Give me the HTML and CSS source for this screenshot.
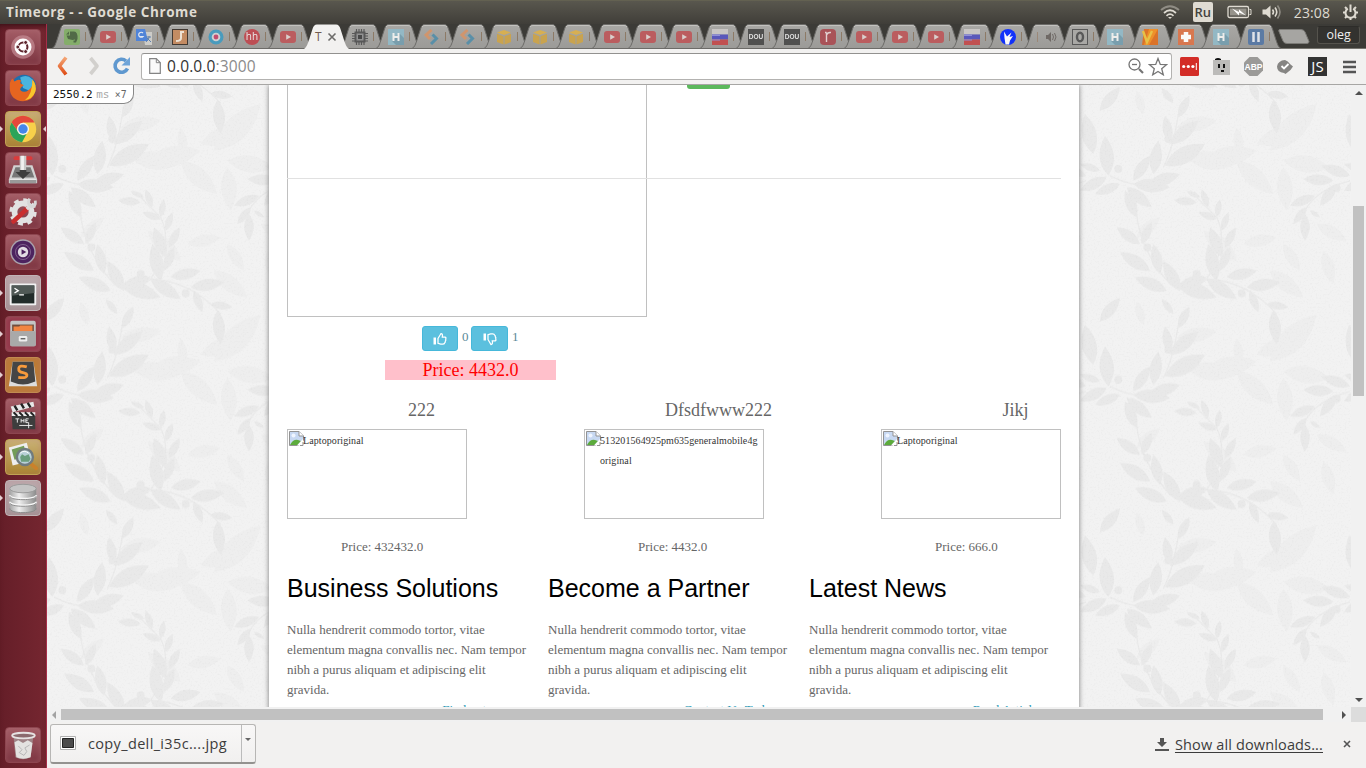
FILE: index.html
```html
<!DOCTYPE html>
<html lang="en">
<head>
<meta charset="utf-8">
<title>Timeorg - - Google Chrome</title>
<link rel="stylesheet" href="styles.css">
</head>
<body>
<svg class="defs" width="0" height="0">
  <defs>
    <linearGradient id="tabfill" x1="0" y1="0" x2="0" y2="1"><stop offset="0" stop-color="#a9a8a5"/><stop offset="1" stop-color="#9b9a97"/></linearGradient>
    <linearGradient id="metal" x1="0" y1="0" x2="1" y2="0"><stop offset="0" stop-color="#a5a5a5"/><stop offset=".35" stop-color="#eee"/><stop offset="1" stop-color="#8c8c8c"/></linearGradient>
    <linearGradient id="orange" x1="0" y1="0" x2="0" y2="1"><stop offset="0" stop-color="#f4a676"/><stop offset="1" stop-color="#df4d16"/></linearGradient>
    <symbol id="tab" viewBox="0 0 46 25"><path d="M0 24.500C3 23 3.500 20 5 16L8.500 5C9.500 2 10.500.5 13 .5H32C34.500.5 35.500 2 36.500 5L40 16C41.500 20 42 23 45 24.500Z" fill="url(#tabfill)" stroke="#6c6b68"/><path d="M10 3Q11 1.500 13 1.500H32Q34 1.500 35 3" stroke="#c3c2bf" fill="none"/></symbol>
    <symbol id="yt" viewBox="0 0 16 16"><rect y="2" width="16" height="12" rx="3" fill="#bd5a5c"/><path d="M6.200 5.200 11 8l-4.800 2.800Z" fill="#ddd3d0"/></symbol>
    <symbol id="h" viewBox="0 0 16 16"><path d="M0 0h16v16H0Z" fill="#93bac7"/><path d="M11 4l5 5v7H8l-4-4Z" fill="#789faf"/><path d="M5.500 4v8M10.500 4v8M5.500 8h5" stroke="#f2f2f0" stroke-width="2"/></symbol>
    <symbol id="zig" viewBox="0 0 16 16"><path d="M7.500 1 2 6 6 10" stroke="#d4956b" stroke-width="3" fill="none"/><path d="M8.500 5.500 12.500 9.500 7 15" stroke="#568fa9" stroke-width="3" fill="none"/></symbol>
    <symbol id="box" viewBox="0 0 16 16"><path d="M1 3.500 8 1l7 2.500L8 6Z" fill="#dab04e"/><path d="M1 4.800 7.500 7.200V15.500L1 13ZM15 4.800 8.500 7.200V15.500L15 13Z" fill="#cca44b"/></symbol>
    <symbol id="flag" viewBox="0 0 16 16"><path d="M0 0h16v5.500H0Z" fill="#cbc8c6"/><path d="M0 5.500h16v5H0Z" fill="#5755bd"/><path d="M0 10.500h16V16H0Z" fill="#c34c4d"/><path d="M0 5.500h8v1.500H0ZM0 10.500h8v1H0Z" fill="#8f8fdb"/></symbol>
    <symbol id="broken" viewBox="0 0 16 16"><path d="M.5.5H10L14.500 5V9L10 14.500H.5Z" fill="#c7d8f2" stroke="#939393"/><path d="M10 .5V5h4.500" fill="#fff" stroke="#939393"/><path d="M1 14Q4 8 9 9L12 10 8.500 14Z" fill="#5cab3c"/><circle cx="4.500" cy="4.500" r="2" fill="#eff5ff"/><path d="M8 14.500 14 8v7Z" fill="#fff"/><path d="M11 14.500h3V11" fill="none" stroke="#939393"/></symbol>
    <symbol id="thumb" viewBox="0 0 16 16"><path d="M1.500 6.500h2.500v7H1.500Z" fill="#fff"/><path d="M6 7.500 9 2.500Q11 2.500 10.300 6.200H13Q14.500 6.500 13.700 8 14.200 9.300 13.300 10.200 13.500 11.500 12.600 12 12.300 13.200 10.700 13.200H8.700L6 12.300Z" fill="none" stroke="#fff" stroke-width="1.250"/></symbol>
  </defs>
</svg>

<header class="panel">
  <div class="panel-title">Timeorg - - Google Chrome</div>
  <div class="indicators">
    <svg width="22" height="16" viewBox="0 0 22 16" fill="none" stroke-width="1.800"><path d="M2 6Q11-1.500 20 6" stroke="#8f8c84"/><path d="M5 9Q11 3.500 17 9M7.500 11.800Q11 8.500 14.500 11.800" stroke="#dfdbd2"/><path d="m9 13 2 2 2-2Z" fill="#dfdbd2" stroke="none"/></svg>
    <span class="lang">Ru</span>
    <svg width="25" height="14" viewBox="0 0 25 14"><rect x="1" y="1.500" width="20.500" height="11" rx="1.500" fill="none" stroke="#dfdbd2" stroke-width="1.300"/><rect x="3" y="3.500" width="16.500" height="7" fill="#96938b"/><path d="M22.500 4.500h1.500v5h-1.500" fill="none" stroke="#dfdbd2"/><path d="M5 3.500 12 7V4.500l7 6-7-3v3Z" fill="#fff"/></svg>
    <svg width="20" height="16" viewBox="0 0 20 16" fill="none" stroke-width="1.600"><path d="M.5 5.500h3.500L8.500 1.500v13L4 10.500H.5Z" fill="#dfdbd2"/><path d="M10.500 5.500q2 2.500 0 5M13 3.500q3.500 4.500 0 9" stroke="#dfdbd2"/><path d="M15.500 1.500q5 6.500 0 13" stroke="#8f8c84"/></svg>
    <span class="clock">23:08</span>
    <svg width="17" height="17" viewBox="0 0 17 17" fill="none" stroke="#dfdbd2" stroke-width="2"><path d="M5.800 4.600A5 5 0 1 0 11.200 4.600"/><path d="M8.500.5V8M1 8.500h2.500M13.500 8.500H16M3 3l1.800 1.800M14 3l-1.800 1.800M3 14l1.800-1.800M14 14l-1.800-1.800M8.500 13.500V16"/></svg>
  </div>
</header>

<div class="desktop">
<aside class="launcher">
  <div class="apps">
    <div class="tile"><svg viewBox="0 0 36 36"><circle cx="18" cy="18" r="12.500" fill="#ca9299" opacity=".65"/><circle cx="18" cy="18" r="9" fill="#fff"/><circle cx="18" cy="18" r="4.700" fill="none" stroke="#5e262e" stroke-width="2.200"/><g fill="#5e262e" stroke="#fff"><circle cx="12.500" cy="18" r="2.100"/><circle cx="20.800" cy="13.200" r="2.100"/><circle cx="20.800" cy="22.800" r="2.100"/></g></svg></div>
    <div class="tile"><svg viewBox="0 0 36 36"><circle cx="19" cy="17" r="13" fill="#1d70ae"/><path d="M15 7Q22 3 28 9L31 15 25 21 18 18Z" fill="#4ab4df"/><path d="M4 13Q5 9 7 8L9 11Q13 8 16 10L15 13 19 15Q15 17 15 20 19 24 24 20 29 17 28 9 33 15 31 22 28 32 18 32 5 31 4 19Z" fill="#e66520"/><path d="M28 9Q33 15 31 22 28 30 20 31 28 25 28 9Z" fill="#f9c52c"/></svg></div>
    <div class="tile gold arrow both"><svg viewBox="0 0 36 36"><circle cx="18" cy="18" r="14" fill="#f7d04a"/><path d="M5.900 11A14 14 0 0 1 30.100 11H18L13 21Z" fill="#e4483b"/><path d="M5.900 11A14 14 0 0 0 17 32L23 21 13 21Z" fill="#2ba45a"/><circle cx="18" cy="18" r="6.500" fill="#f6f4e7"/><circle cx="18" cy="18" r="5" fill="#4586ea"/></svg></div>
    <div class="tile"><svg viewBox="0 0 36 36"><path d="M8 13h20l5 15v4H3v-4Z" fill="#d2d2d2"/><path d="M10 15h16l4 11H6Z" fill="#777"/><path d="M4 28h28v4H4Z" fill="#999"/><path d="M4 28h28" stroke="#eee"/><rect x="8" y="3.500" width="20" height="4" rx="2" fill="#da3b3b"/><path d="M14.500 15h7v5h4.500L18 27.500 10 20h4.500Z" fill="#3e3e3e"/><path d="M14.500 3h7v15h-7Z" fill="#c9c9c9"/><path d="M16 3h3v15h-3Z" fill="#f1f1f1"/></svg></div>
    <div class="tile"><svg viewBox="0 0 36 36"><circle cx="18" cy="19" r="9" fill="none" stroke="#e2e2e2" stroke-width="6"/><circle cx="18" cy="19" r="12.500" fill="none" stroke="#e2e2e2" stroke-width="4" stroke-dasharray="5 4.800"/><path d="M8 29 22 16" stroke="#c92e2e" stroke-width="5" stroke-linecap="round"/><path d="M22 16 27 11" stroke="#ddd" stroke-width="4"/><path d="M31 7Q32 13 27 13.500 22 11 25 5" fill="none" stroke="#d7d7d7" stroke-width="3"/></svg></div>
    <div class="tile"><svg viewBox="0 0 36 36"><circle cx="18" cy="18" r="13.500" fill="#aaa3ad"/><circle cx="18" cy="18" r="12" fill="#4d235f"/><circle cx="18" cy="18" r="8" fill="none" stroke="#81628e"/><circle cx="18" cy="18" r="5.500" fill="#e2dce4"/><path d="m16.500 15 5 3-5 3Z" fill="#4d235f"/></svg></div>
    <div class="tile silver arrow"><svg viewBox="0 0 36 36"><rect x="4" y="8" width="28" height="23" rx="1" fill="#f1f1f1"/><rect x="6" y="10" width="24" height="19" fill="#222c2a"/><path d="M6 10h24v8L6 21Z" fill="#505956"/><path d="m9 13 4 2.500-4 2.500M14 20h5" stroke="#fff" fill="none" stroke-width="1.400"/></svg></div>
    <div class="tile rose arrow"><svg viewBox="0 0 36 36"><rect x="4.500" y="4" width="27" height="27" rx="2" fill="#c4c4c4"/><path d="M6.500 8h23v7H6.500Z" fill="#704d3d"/><path d="M8 10h6l1-1h13v6H8Z" fill="#f28542"/><path d="M4.500 15h27v14q0 2-2 2H6.500q-2 0-2-2Z" fill="#a9a9a9"/><rect x="13.500" y="20" width="9" height="6" rx="1.500" fill="#eee"/><path d="M15.500 23h5" stroke="#666" stroke-width="1.500"/></svg></div>
    <div class="tile amber arrow"><svg viewBox="0 0 36 36"><path d="M7 4h22l4 26H3Z" fill="#ddd"/><path d="M7 4h22l2 21q-13 6-26 0Z" fill="#454545"/><path d="M22 9.500Q14 7 13.500 11T18 15.500Q23 16.500 22 19T13 20.500" fill="none" stroke="#f89b3c" stroke-width="3"/></svg></div>
    <div class="tile"><svg viewBox="0 0 36 36"><path d="M6 16h25v16H7Z" fill="#3d3d3d"/><path d="M6 14h25v4H6Z" fill="#eee"/><path d="m8 14 4 4m2-4 4 4m2-4 4 4m2-4 4 4" stroke="#222" stroke-width="2"/><path d="m5 8 24-5 1 5L7 14Z" fill="#e8e8e8"/><path d="m9 7 3 5m4-7 3 5m4-6 3 5" stroke="#222" stroke-width="2.500"/><path d="M10 21h4m-2 0v4m4-4v4m0-2h3m0-2v4m5-4h-3v4h3m-3-2h2M14 28h14M24 25v6" stroke="#eee" fill="none"/></svg></div>
    <div class="tile gold arrow"><svg viewBox="0 0 36 36"><path d="m3 8 19-5 5 19-20 5Z" fill="#eee"/><path d="m6 10 13-4 3 12-13 3Z" fill="#739c58"/><path d="m25 24 7 6" stroke="#ca812b" stroke-width="4" stroke-linecap="round"/><circle cx="20" cy="18" r="8.500" fill="#b9d1d8" stroke="#707b7e" stroke-width="2.500"/><path d="M15 18l2-3 3 2 4-2 2 5-2 3h-8Z" fill="#6a9e7d"/><path d="M15 14Q19 10 24 14" stroke="#fff" fill="none"/></svg></div>
    <div class="tile silver arrow"><svg viewBox="0 0 36 36"><path d="M4 8v21c0 6 28 6 28 0V8" fill="url(#metal)"/><ellipse cx="18" cy="8" rx="14" ry="4.500" fill="#c4c4c4" stroke="#999"/><path d="M4 15c0 5 28 5 28 0M4 22c0 5 28 5 28 0" fill="none" stroke="#f7f7f7" stroke-width="2"/><path d="M4 16c0 5 28 5 28 0M4 23c0 5 28 5 28 0M4 29c0 6 28 6 28 0" fill="none" stroke="#888"/></svg></div>
  </div>
  <div class="tile"><svg viewBox="0 0 36 36"><path d="m8 9 2 22q8 4 16 0l3-22Z" fill="#9f8386"/><path d="m9 15 4-2 5 3 5-3 5 3-2 15q-8 3-15 0Z" fill="#e3e2e0"/><path d="m13 19 4 4-3 3 5 3 3-4-2-4 5-3" fill="none" stroke="#b5b5b5"/><ellipse cx="18.500" cy="8" rx="12" ry="3" fill="#8b6a6e" stroke="#e6e2e2" stroke-width="2"/></svg></div>
</aside>

<main class="browser">
  <div class="tabstrip">
    <div class="tab"><svg class="shape"><use href="#tab"/></svg><svg class="fav"><rect width="16" height="16" rx="2" fill="#83ae68"/><path d="M6 2.500h4q4 0 3.500 7.500L12 13.500H9.500V11.500H11V10.500L8.500 11 4 10 2.500 6.500H6Z" fill="#4d6843"/><path d="M2 5.500 5 2.500v3Z" fill="#4d6843"/></svg><i></i></div>
    <div class="tab"><svg class="shape"><use href="#tab"/></svg><svg class="fav"><use href="#yt"/></svg><i></i></div>
    <div class="tab"><svg class="shape"><use href="#tab"/></svg><svg class="fav"><path d="M7 3h9v13H9Z" fill="#d0cfcb"/><path d="M0 0h9l3 12H0Z" fill="#4c83dc"/><path d="M8 4.500A2.500 2.500 0 1 0 8 8H5.500" transform="translate(-1 -.5)" stroke="#e8edf5" stroke-width="1.200" fill="none"/><path d="M10 8h5m-2-1v2l-3 4m1-4 4 4" stroke="#5a7fae" fill="none"/></svg><i></i></div>
    <div class="tab"><svg class="shape"><use href="#tab"/></svg><svg class="fav"><rect x=".5" y=".5" width="15" height="15" fill="#c58b60" stroke="#3d342d"/><path d="M12 3H9v6q0 3-5 3" stroke="#f2e6d7" stroke-width="2" fill="none"/></svg><i></i></div>
    <div class="tab"><svg class="shape"><use href="#tab"/></svg><svg class="fav"><circle cx="8" cy="8" r="5.900" fill="#d3d2d3" stroke="#459bbf" stroke-width="3.200"/><circle cx="8" cy="8" r="2.400" fill="#c4486e"/></svg><i></i></div>
    <div class="tab"><svg class="shape"><use href="#tab"/></svg><span class="fav hh">hh</span><i></i></div>
    <div class="tab"><svg class="shape"><use href="#tab"/></svg><svg class="fav"><use href="#yt"/></svg><i></i></div>
    <div class="tab active"><svg class="shape" viewBox="0 0 46 25"><path d="M0 25C3 23 3.500 20 5 16L8.500 5C9.500 2 10.500.5 13 .5H32C34.500.5 35.500 2 36.500 5L40 16C41.500 20 42 23 45 25Z" fill="#f2f1f0"/></svg><span class="tab-title">T</span><svg class="close" viewBox="0 0 10 10"><path d="m1.500 1.500 7 7m0-7-7 7" stroke="#6d6c6a" stroke-width="1.600"/></svg></div>
    <div class="tab"><svg class="shape"><use href="#tab"/></svg><svg class="fav"><path d="M4.500 0v16m2.500-16v16m2.500-16v16M12 0v16M0 4.500h16M0 7h16M0 9.500h16M0 12h16" stroke="#555" stroke-width="1.200"/><path d="M2.500 2.500h11v11h-11Z" fill="#555"/><path d="M4.500 4.500h7v7h-7Z" fill="#929292"/><path d="M6 6h4v4H6Z" fill="#444"/></svg><i></i></div>
    <div class="tab"><svg class="shape"><use href="#tab"/></svg><svg class="fav"><use href="#h"/></svg><i></i></div>
    <div class="tab"><svg class="shape"><use href="#tab"/></svg><svg class="fav"><use href="#zig"/></svg><i></i></div>
    <div class="tab"><svg class="shape"><use href="#tab"/></svg><svg class="fav"><use href="#zig"/></svg><i></i></div>
    <div class="tab"><svg class="shape"><use href="#tab"/></svg><svg class="fav"><use href="#box"/></svg><i></i></div>
    <div class="tab"><svg class="shape"><use href="#tab"/></svg><svg class="fav"><use href="#box"/></svg><i></i></div>
    <div class="tab"><svg class="shape"><use href="#tab"/></svg><svg class="fav"><use href="#box"/></svg><i></i></div>
    <div class="tab"><svg class="shape"><use href="#tab"/></svg><svg class="fav"><use href="#yt"/></svg><i></i></div>
    <div class="tab"><svg class="shape"><use href="#tab"/></svg><svg class="fav"><use href="#yt"/></svg><i></i></div>
    <div class="tab"><svg class="shape"><use href="#tab"/></svg><svg class="fav"><use href="#yt"/></svg><i></i></div>
    <div class="tab"><svg class="shape"><use href="#tab"/></svg><svg class="fav"><use href="#flag"/></svg><i></i></div>
    <div class="tab"><svg class="shape"><use href="#tab"/></svg><span class="fav dou">DOU</span><i></i></div>
    <div class="tab"><svg class="shape"><use href="#tab"/></svg><span class="fav dou">DOU</span><i></i></div>
    <div class="tab"><svg class="shape"><use href="#tab"/></svg><svg class="fav"><rect width="16" height="16" rx="4" fill="#aa4f55"/><path d="M6.500 13V3.500M5 3.500h1.500M6.500 6q1-3 4.500-2.500" stroke="#e6d4d4" stroke-width="1.400" fill="none"/></svg><i></i></div>
    <div class="tab"><svg class="shape"><use href="#tab"/></svg><svg class="fav"><use href="#yt"/></svg><i></i></div>
    <div class="tab"><svg class="shape"><use href="#tab"/></svg><svg class="fav"><use href="#yt"/></svg><i></i></div>
    <div class="tab"><svg class="shape"><use href="#tab"/></svg><svg class="fav"><use href="#yt"/></svg><i></i></div>
    <div class="tab"><svg class="shape"><use href="#tab"/></svg><svg class="fav"><use href="#flag"/></svg><i></i></div>
    <div class="tab"><svg class="shape"><use href="#tab"/></svg><svg class="fav"><circle cx="8" cy="8" r="8" fill="#0a2cff"/><path d="M4 2.500 7 7.500 11.500 3.500 9.500 8 13 7 10 11.500 9 15.500H5.500L4.500 9Z" fill="#fff"/></svg><i></i></div>
    <div class="tab"><svg class="shape"><use href="#tab"/></svg><svg class="fav"><path d="M1.500 3v10" stroke="#9b8776"/><path d="M10 6h2l3-3v10l-3-3h-2Z" fill="#6d6763"/><path d="M16.500 5q2 3 0 6M18.500 4q3 4 0 8" stroke="#6d6763" fill="none"/></svg></div>
    <div class="tab narrow"><svg class="shape"><use href="#tab"/></svg><svg class="fav"><rect x=".5" y=".5" width="15" height="15" fill="#aaa9a6" stroke="#555"/><ellipse cx="8" cy="8" rx="3" ry="4.300" fill="none" stroke="#555" stroke-width="2.400"/></svg><i></i></div>
    <div class="tab narrow"><svg class="shape"><use href="#tab"/></svg><svg class="fav"><use href="#h"/></svg></div>
    <div class="tab narrow"><svg class="shape"><use href="#tab"/></svg><svg class="fav"><path d="M2 0h14v16H0Z" fill="#df7123"/><path d="M7 0h9L7 16H2Z" fill="#f29024"/><path d="m1 2 4 11 5-11" stroke="#ebc343" stroke-width="2.400" fill="none"/></svg></div>
    <div class="tab narrow"><svg class="shape"><use href="#tab"/></svg><svg class="fav"><path d="M0 0h16v16H0Z" fill="#dc764c"/><path d="M8 3v10M3 8h10" stroke="#fff" stroke-width="4.500"/></svg></div>
    <div class="tab narrow"><svg class="shape"><use href="#tab"/></svg><svg class="fav"><use href="#h"/></svg></div>
    <div class="tab narrow"><svg class="shape"><use href="#tab"/></svg><svg class="fav"><rect width="16" height="16" rx="2" fill="#5879a5"/><path d="M5.500 3v10M10.500 3v10" stroke="#e3e7ed" stroke-width="2.500"/></svg><i></i></div>
    <svg class="newtab" viewBox="0 0 32 15"><path d="M2 .5H23Q26 .5 27 3L31 12.500Q31 14.500 29 14.500H9Q6 14.500 5 12L.8 2Q.5.5 2 .5Z" fill="#a6a5a2" stroke="#7b7a76"/></svg>
    <span class="user">oleg</span>
  </div>

  <div class="toolbar">
    <div class="nav">
      <svg width="14" height="20" viewBox="0 0 14 20"><path d="M10 1.500 3.500 10 10 18.500" stroke="url(#orange)" stroke-width="3.600" fill="none" stroke-linejoin="round"/></svg>
      <svg width="14" height="20" viewBox="0 0 14 20"><path d="M3.500 2 10 10 3.500 18" stroke="#d2d0cd" stroke-width="3.600" fill="none" stroke-linejoin="round"/></svg>
      <svg width="20" height="20" viewBox="0 0 20 20"><path d="M15.500 12.500A6.500 6.500 0 1 1 14 5" stroke="#5f98cf" stroke-width="3.600" fill="none"/><path d="M18 1v8.500H9.500Z" fill="#6fa4d8"/></svg>
    </div>
    <div class="omnibox">
      <svg width="12" height="16" viewBox="0 0 12 16"><path d="M.7.7h6.600l4 4v10.600H.7Z" fill="#fafafa" stroke="#848484" stroke-width="1.200"/><path d="M7.300.7v4h4" fill="none" stroke="#848484"/></svg>
      <span class="url">0.0.0.0<span>:3000</span></span>
      <svg width="16" height="16" viewBox="0 0 16 16" fill="none" stroke="#747474"><circle cx="6.500" cy="6.500" r="5.500" stroke-width="1.300"/><path d="M4 6.500h5" stroke-width="1.300"/><path d="m11 11 4 4" stroke-width="2.200"/></svg>
      <svg width="20" height="19" viewBox="0 0 20 19"><path d="m10 1.500 2.300 5.900 6.200.3-4.800 4 1.600 6.100-5.300-3.400-5.300 3.400 1.600-6.100-4.800-4 6.200-.3Z" fill="#fff" stroke="#777" stroke-width="1.300"/></svg>
    </div>
    <div class="extensions">
      <svg width="19" height="19" viewBox="0 0 19 19"><rect width="19" height="19" rx="1.500" fill="#d32d27"/><g fill="#fff"><circle cx="3.700" cy="9.500" r="1.600"/><circle cx="8.300" cy="9.500" r="1.600"/><circle cx="12.900" cy="9.500" r="1.600"/></g><path d="M16.300 6v7" stroke="#fff"/></svg>
      <svg width="19" height="19" viewBox="0 0 19 19"><path d="M1 3h17v15H1Z" fill="#bcbbb9"/><path d="M3 3V2Q6 0 9 2V3Z" fill="#111"/><path d="M6 7h2v4H6ZM11 7h2v4h-2ZM9 13h3v2H9Z" fill="#111"/></svg>
      <svg width="19" height="19" viewBox="0 0 19 19"><path d="M5.500 0h8L19 5.500v8L13.500 19h-8L0 13.500v-8Z" fill="#9b9a98"/><text x="9.500" y="12.700" class="abp">ABP</text></svg>
      <svg width="19" height="19" viewBox="0 0 19 19"><path d="M9 3Q12 4 14 7L17 9.500Q15 13 12 15L9.500 17 8 16Q1 15 1 9.500 2 3.500 9 3Z" fill="#868583"/><path d="m5.500 9 2.500 2.500 4.500-4.500" stroke="#fff" stroke-width="1.800" fill="none"/></svg>
      <span class="js">JS</span>
      <svg width="13" height="14" viewBox="0 0 13 14"><path d="M0 2h13M0 7h13M0 12h13" stroke="#555" stroke-width="2.700"/></svg>
    </div>
  </div>

  <div class="content">
    <div class="viewport">
      <svg class="wallpaper" width="1304" height="622">
        <defs>
          <pattern id="damask" x="-33" y="-1" width="264" height="210.700" patternUnits="userSpaceOnUse">
            <g transform="scale(.33333)"><g id="leaves"></g><use href="#leaves" y="-632"/><use href="#leaves" x="-792"/><use href="#leaves" x="-792" y="-632"/></g>
          </pattern>
          <filter id="grain" x="0" y="0" width="100%" height="100%"><feTurbulence type="fractalNoise" baseFrequency=".55" numOctaves="2"/><feColorMatrix values="0 0 0 0 0  0 0 0 0 0  0 0 0 0 0  .07 0 0 0 -.035"/></filter>
        </defs>
        <rect width="1304" height="622" fill="#f2f2f2"/>
        <rect width="1304" height="622" fill="url(#damask)"/>
        <rect width="1304" height="622" filter="url(#grain)"/>
      </svg>
      <div class="profiler">2550.2 <span>ms</span> <small>×7</small></div>
      <div class="page">
        <section class="hero">
          <div class="hero-image"></div>
          <div class="green-button"></div>
          <hr>
        </section>
        <div class="votes">
          <button><svg width="16" height="16"><use href="#thumb"/></svg></button><a>0</a><button class="down"><svg width="16" height="16"><use href="#thumb"/></svg></button><a>1</a>
        </div>
        <div class="hero-price">Price: 4432.0</div>
        <section class="products">
          <article><h3>222</h3><div class="image"><svg width="16" height="16"><use href="#broken"/></svg><span>Laptoporiginal</span></div><p>Price: 432432.0</p></article>
          <article><h3>Dfsdfwww222</h3><div class="image"><svg width="16" height="16"><use href="#broken"/></svg><span>513201564925pm635generalmobile4g original</span></div><p>Price: 4432.0</p></article>
          <article><h3>Jikj</h3><div class="image"><svg width="16" height="16"><use href="#broken"/></svg><span>Laptoporiginal</span></div><p>Price: 666.0</p></article>
        </section>
        <section class="blurbs">
          <article><h2>Business Solutions</h2><p>Nulla hendrerit commodo tortor, vitae elementum magna convallis nec. Nam tempor nibh a purus aliquam et adipiscing elit gravida.</p><a>Find out more</a></article>
          <article><h2>Become a Partner</h2><p>Nulla hendrerit commodo tortor, vitae elementum magna convallis nec. Nam tempor nibh a purus aliquam et adipiscing elit gravida.</p><a>Contact Us Today</a></article>
          <article><h2>Latest News</h2><p>Nulla hendrerit commodo tortor, vitae elementum magna convallis nec. Nam tempor nibh a purus aliquam et adipiscing elit gravida.</p><a>Read Article</a></article>
        </section>
      </div>
    </div>
    <div class="vscroll"><b class="up"></b><div class="vthumb"></div><b class="dn"></b></div>
    <div class="hscroll"><b class="lf"></b><div class="hthumb"></div><b class="rt"></b></div>
    <div class="corner"></div>
  </div>

  <footer class="downloads">
    <div class="item">
      <svg width="16" height="14" viewBox="0 0 16 14"><path d="M.5.5h15v13H.5Z" fill="#fff" stroke="#b0b0b0"/><path d="M2.500 2.500h11v9h-11Z" fill="#4b4b4b" stroke="#222"/></svg>
      <span class="name">copy_dell_i35c....jpg</span>
      <span class="drop"><b></b></span>
    </div>
    <div class="all">
      <svg width="14" height="13" viewBox="0 0 14 13"><path d="M5 0h4v4h3L7 9 2 4h3Z" fill="#555"/><path d="M0 12h14" stroke="#555" stroke-width="2"/></svg>
      <a>Show all downloads...</a>
      <svg class="x" width="8" height="8" viewBox="0 0 8 8"><path d="m1 1 6 6m0-6-6 6" stroke="#555" stroke-width="1.600"/></svg>
    </div>
  </footer>
</main>
</div>
<script src="leaves.js"></script>
</body>
</html>
```
FILE: styles.css
```css
* { box-sizing: border-box; }
body { margin: 0; width: 1366px; height: 768px; overflow: hidden; font-family: "Open Sans", "Noto Sans", sans-serif; }
svg { display: block; flex: none; }
.defs { position: absolute; }
.panel { height: 24px; display: flex; justify-content: space-between; align-items: center; padding: 0 7px 1px 6px; background: linear-gradient(#59574e, #403e39); border-top: 1px solid #636151; color: #dfdbd2; }
.panel-title { font-size: 13.500px; font-weight: 700; letter-spacing: .56px; }
.indicators { display: flex; align-items: center; }
.lang { width: 20px; height: 20px; margin: 0 14px 0 12px; border-radius: 2px; background: #dfdbd2; color: #45433e; font-size: 13px; line-height: 20px; font-weight: 600; text-align: center; }
.indicators svg:nth-of-type(3) { margin-left: 10px; }
.clock { margin: 0 12px 0 12px; font-size: 14px; letter-spacing: .1px; }

.desktop { display: flex; height: 744px; }
.launcher { width: 47px; padding: 5px 0 5px 5px; display: flex; flex-direction: column; justify-content: space-between; background: linear-gradient(90deg, #651e28, #752630); border-right: 1px solid #a82e49; box-shadow: inset 0 5px 6px -4px #310d13; }
.apps { display: flex; flex-direction: column; gap: 5px; }
.tile { position: relative; width: 36px; height: 36px; border-radius: 4px; background: linear-gradient(#a35d66, #7d3541); border: 1px solid #8d454f; box-shadow: inset 0 0 5px #b6767d55; }
.tile svg { width: 34px; height: 34px; }
.gold { background: linear-gradient(#c9b175, #a98431); border-color: #c0a353; }
.silver { background: linear-gradient(#bcabae, #a59699); border-color: #c0b4b6; }
.rose { background: #93384a; }
.amber { background: #bb7b36; border-color: #c18b50; }
.arrow::before { content: ""; position: absolute; left: -6px; top: 14px; border: 3px solid transparent; border-left-color: #e3ced1; border-right: 0; }
.both::after { content: ""; position: absolute; right: -6px; top: 14px; border: 3px solid transparent; border-right-color: #e3ced1; border-left: 0; }

.browser { width: 1319px; display: flex; flex-direction: column; }
.tabstrip { height: 25px; background: #3c3b37; display: flex; padding-left: 5px; border-bottom: 1px solid #77756f; }
.tab { position: relative; width: 36px; height: 24px; flex: none; }
.tab .shape { position: absolute; left: 0; top: 0; width: 46px; height: 25px; overflow: visible; }
.fav { position: absolute; left: 12px; top: 5px; width: 16px; height: 16px; overflow: visible; opacity: .95; }
.tab i { position: absolute; left: 33px; top: 8px; width: 1px; height: 9px; background: #8d7a66; }
.hh { border-radius: 8px; background: #bf4a51; color: #eee; font-size: 10px; line-height: 15px; text-align: center; }
.dou { background: #4c4c4b; color: #e6e6e6; font: bold 6.5px/16px "Liberation Sans", sans-serif; text-align: center; }
.narrow { width: 35.2px; }
.active { z-index: 2; }
.tab-title { position: absolute; left: 11px; top: 4px; width: 8px; font-size: 12px; color: #715b4f; }
.close { position: absolute; left: 23px; top: 8px; width: 10px; height: 10px; }
.newtab { width: 32px; height: 15px; margin: 5px 0 0 7px; }
.user { height: 18px; width: 43px; margin: 2px 0 0 7px; border: 1px solid #55534d; border-top-color: #2d2c29; border-radius: 3px; background: #33322f; color: #eee; font-size: 12.500px; line-height: 16px; text-align: center; }

.toolbar { height: 35px; background: #f2f1f0; display: flex; align-items: center; }
.nav { display: flex; align-items: center; gap: 16px; padding-left: 9px; margin-top: -1px; }
.nav svg:nth-child(2) { margin-left: 1px; }
.nav svg:nth-child(3) { margin-left: -5px; }
.omnibox { width: 1031px; height: 27px; margin-left: 9px; background: #fff; border: 1px solid #b3b2b0; border-top-color: #92918f; border-radius: 3px; display: flex; align-items: center; padding: 0 3px 1px 7px; }
.url { margin-left: 6px; flex: 1; font-size: 15.500px; letter-spacing: .12px; color: #333; line-height: 23px; }
.url span { color: #8b8b8b; }
.omnibox svg:last-child { margin-left: 4px; }
.extensions { display: flex; align-items: center; gap: 13px; padding-left: 8px; }
.extensions svg:last-child { margin-left: 3px; }
.abp { font: bold 8.500px "Liberation Sans", sans-serif; fill: #fff; text-anchor: middle; }
.js { width: 19px; height: 19px; background: #333; color: #fff; font-size: 15px; line-height: 19px; text-align: center; }

.content { height: 638px; border-top: 1px solid #a7a6a4; border-bottom: 1px solid #d1d0ce; display: grid; grid-template: 622px 15px / 1304px 15px; }
.viewport { position: relative; overflow: hidden; font-family: "Liberation Serif", serif; font-size: 13px; line-height: 20px; color: #666; }
.wallpaper { position: absolute; left: 0; top: 0; }
.profiler { position: absolute; left: 0; top: 0; width: 87px; height: 19px; padding-left: 6px; background: #fff; border: solid #888; border-width: 0 1px 1px 0; border-radius: 0 0 10px 0; font: 11px/19px "DejaVu Sans Mono", monospace; color: #111; white-space: nowrap; word-spacing: -3.200px; }
.profiler span { color: #aaa; }
.profiler small { font-size: 9.800px; color: #666; margin-left: 2px; }
.page { position: relative; width: 810px; height: 640px; margin-left: 222px; padding: 0 18px; background: #fff; box-shadow: 0 0 5px #777; }
.hero { position: relative; height: 232px; display: flex; align-items: flex-start; gap: 40px; }
.hero-image { width: 360px; height: 232px; border: 1px solid #c0c0c0; border-top: 0; }
.green-button { width: 43px; height: 4px; background: #5cb85c; border-radius: 0 0 3px 3px; }
.hero hr { position: absolute; left: 0; top: 93px; width: 774px; margin: 0; border: 0; border-top: 1px solid #e1e1e1; }
.votes { display: flex; margin: 9px 0 0 135px; height: 25px; color: #428ba0; }
.votes button { width: 36px; height: 25px; padding: 0; display: flex; align-items: center; justify-content: center; border: 1px solid #46b8da; border-radius: 3px; background: #5bc0de; }
.votes .down { width: 37px; }
.votes .down svg { transform: scaleY(-1); }
.votes a { margin: 1px 3px 0 4px; color: #5a8a98; }
.votes a:nth-of-type(1) { width: 6px; }
.hero-price { margin: 9px 0 0 98px; width: 171px; height: 20px; background: pink; color: red; font-size: 18px; text-align: center; }
.products { display: flex; gap: 117px; margin-top: 20px; }
.products article { width: 180px; }
.products h3 { width: 269px; margin: 0 0 9px; font-size: 18px; line-height: 20px; font-weight: 400; text-align: center; }
.products .image { width: 180px; height: 90px; border: 1px solid #c0c0c0; display: flex; padding: 1px; font-size: 10px; color: #333; }
.image svg { margin-right: -2px; }
.image span { width: 162px; letter-spacing: .08px; }
.products p { margin: 18px 0 0 54px; }
.blurbs { display: flex; }
.blurbs article { width: 261px; flex: none; }
.blurbs h2 { margin: 17px 0 18px; height: 28px; font: 400 25px/28px "Liberation Sans", Arial, sans-serif; color: #000; }
.blurbs p { width: 242px; margin: 0; }
.blurbs a { display: block; width: 229px; text-align: right; color: #2c9ab7; }

.vscroll { background: #f1f1f1; display: flex; flex-direction: column; align-items: center; }
.vthumb { width: 11px; height: 190px; margin: 111px 0 auto; background: #c1c1c1; }
.vscroll b, .hscroll b, .drop b { width: 0; height: 0; border: 4px solid transparent; }
.vscroll .up { border-bottom-color: #505050; border-top: 0; margin-top: 6px; }
.vscroll .dn { border-top-color: #505050; border-bottom: 0; margin-bottom: 5px; }
.hscroll { background: #f1f1f1; display: flex; align-items: center; }
.hscroll .lf { border-right-color: #a3a3a3; border-left: 0; margin-left: 5px; }
.hthumb { height: 11px; width: 1262px; margin: 0 auto 0 5px; background: #c1c1c1; }
.hscroll .rt { border-left-color: #505050; border-right: 0; margin-right: 5px; }
.corner { background: #dcdcdc; }
.downloads { flex: 1; background: #f2f1f0; display: flex; justify-content: space-between; align-items: flex-start; padding: 2px 15px 0 3px; color: #3c3c3c; font-size: 14px; }
.item { width: 206px; height: 40px; border: 1px solid #b7b6b4; border-bottom: 2px solid #93928f; border-radius: 3px; display: flex; background: linear-gradient(#f8f7f7, #f1f0ef); }
.item > svg { margin: 11px 12px 0 9px; }
.name { line-height: 38px; width: 153px; white-space: nowrap; font-size: 14.500px; letter-spacing: .35px; }
.drop { flex: 1; border-left: 1px solid #bbb; padding: 13px 0 0 3px; }
.drop b { display: block; border-width: 3px; border-top-color: #666; border-bottom: 0; }
.all { display: flex; align-items: center; height: 40px; }
.all a { margin: 0 20px 0 6px; font-size: 14.500px; letter-spacing: .14px; text-decoration: underline; text-underline-offset: 2px; }
```
FILE: leaves.js
```js
// Wallpaper foliage: each leaf is [base x, base y, tip x, tip y].
const dark = [
  [285,245,405,180],[300,180,385,110],[325,100,358,35],[300,175,285,95],[250,270,265,170],[235,300,330,270],
  [190,290,240,215],[150,300,75,330],[190,300,300,310],[110,280,30,320],[115,275,105,155],[70,210,45,90],
  [90,260,30,240],[170,310,245,370],[200,400,165,320],[210,480,140,430],[215,480,245,415],[240,560,150,505],
  [270,570,250,480],[290,620,195,580],[330,620,280,530],[320,600,440,640],[410,585,500,645],[410,580,320,610],
  [470,580,560,560],[530,610,630,595],[540,620,565,685],[590,660,655,670],[610,680,620,780],[440,590,415,480],
  [450,560,480,490],[455,520,420,430],[465,490,497,430],[455,440,475,385],[440,405,385,385],[440,400,450,345],
  [415,370,395,315],[380,355,312,348],[390,340,350,322],[790,290,700,285],[840,275,755,245],[800,300,750,365],
  [735,335,660,365],[710,370,670,420],[705,390,705,470],[720,380,750,400],[310,690,275,645],[90,80,150,10]
];
const light = [
  [400,230,560,200],[500,230,610,330],[640,250,650,380],[640,230,780,250],[510,210,500,130],[600,200,740,60],
  [520,480,620,460],[740,420,830,470],[760,500,790,600],[600,560,700,640],[220,90,200,20],[640,480,690,560],
  [500,530,400,440],[320,130,440,110],[350,220,500,240],[200,460,270,400],[560,180,690,130]
];
function leaf([x, y, u, v], color, width) {
  const dx = u - x, dy = v - y, mx = x + dx * .45, my = y + dy * .45;
  return `<path fill="${color}" d="M${x} ${y}Q${mx - dy * width} ${my + dx * width} ${u} ${v}Q${mx + dy * width} ${my - dx * width} ${x} ${y}Z"/>`;
}
const stems = `<path d="M325 90Q310 190 280 250M120 275Q190 310 240 300M200 390Q210 500 300 600 350 640 410 585 530 590 620 690M410 585Q480 480 440 400L380 340M840 290Q730 320 700 390" fill="none" stroke="#eaeaea" stroke-width="4"/>`;
const berries = [[145,255],[232,490],[380,570],[295,165],[800,312],[515,628]].map(([x, y]) => `<circle cx="${x}" cy="${y}" r="12" fill="#e9e9e9"/>`).join("");
document.getElementById("leaves").innerHTML =
  light.map(l => leaf(l, "#eeeeee", .36)).join("") + stems + dark.map(l => leaf(l, "#e9e9e9", .36)).join("") + berries;
```
